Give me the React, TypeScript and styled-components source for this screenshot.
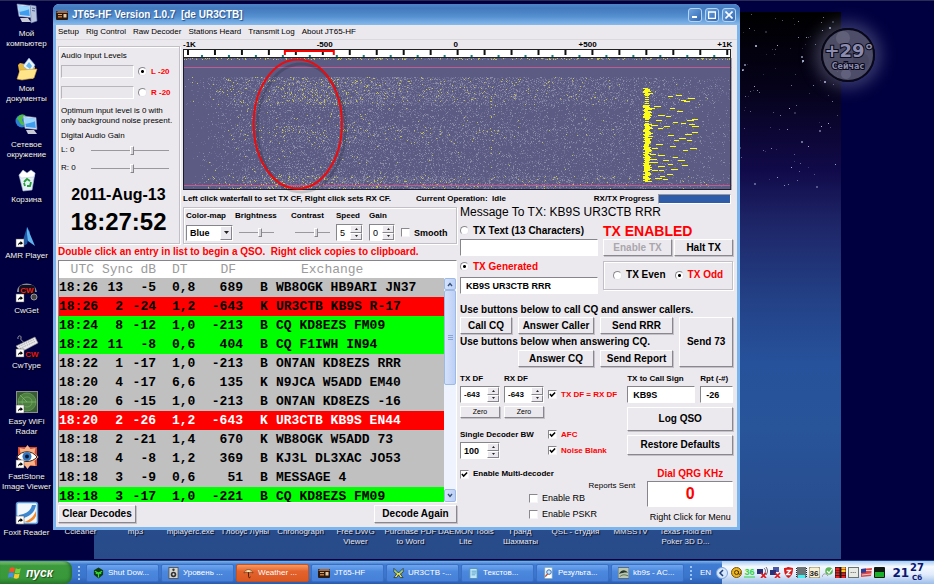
import React from "react";
import styled, { createGlobalStyle, css } from "styled-components";

const SANS = '"Liberation Sans", Arial, sans-serif';
const MONO = '"Liberation Mono", "Courier New", monospace';
const FACE = "#ece9ee";

const GlobalStyle = createGlobalStyle`
  *, *::before, *::after { box-sizing: border-box; }
  html, body { margin: 0; padding: 0; }
  body { font-family: ${SANS}; font-size: 8px; line-height: 10px; color: #000; background: #000040; overflow: hidden; }
  button, input, select { font-family: inherit; margin: 0; padding: 0; border-radius: 0; outline: none; }
  p, h1, h2 { margin: 0; font-weight: inherit; }
`;

/* ---------- random texture helpers ---------- */

function makeRandom(seed: number) {
  let s = seed;
  return () => {
    s = (s * 1664525 + 1013904223) % 4294967296;
    return s / 4294967296;
  };
}

function ramp(stops: number[][], v: number) {
  for (let i = 1; i < stops.length; i++) {
    if (v <= stops[i][0]) {
      const [x0, y0] = stops[i - 1];
      const [x1, y1] = stops[i];
      return y0 + ((y1 - y0) * (v - x0)) / (x1 - x0);
    }
  }
  return stops[stops.length - 1][1];
}

const ACROSS = [[0, 0.02], [20, 0.12], [60, 0.7], [110, 1], [160, 1.05], [240, 0.9], [340, 0.75], [440, 0.55], [500, 0.3], [547, 0.2]];
const YELLOW = [[0, 0], [20, 0.1], [60, 0.4], [110, 1], [150, 1], [200, 0.5], [300, 0.3], [400, 0.2], [480, 0.05], [547, 0]];

function buildNoise() {
  const rnd = makeRandom(77);
  let dim = "";
  let pale = "";
  let yellow = "";
  for (let y = 0; y < 131; y++) {
    let d = 0;
    let h = 0;
    if (y < 2) { d = 0.3; h = 0.16; }
    else if (y < 19) { d = 0; }
    else if (y < 47) { d = 0.5; h = 0.06; }
    else if (y < 66) { d = 0.25; h = 0.01; }
    else if (y < 86) { d = 0.36; h = 0.025; }
    else if (y < 118) { d = 0.27; h = 0.007; }
    else { d = 0.52; h = 0.08; }
    if (y === 72) h = 0.12;
    if (d === 0) continue;
    for (let x = 0; x < 547; x++) {
      const k = y < 2 ? 0.8 : ramp(ACROSS, x);
      const q = y < 2 ? 1 : ramp(YELLOW, x);
      const line = (x === 99 || x === 307) && y > 30 ? 0.12 : 0;
      const r = rnd();
      const cell = `M${x} ${y}h1v1h-1z`;
      if (r < h * q + line * 0.8) yellow += cell;
      else if (r < h * q + d * k * 0.28) pale += cell;
      else if (r < h * q + d * k) dim += cell;
    }
  }
  return { dim, pale, yellow };
}

function buildSignal() {
  const rnd = makeRandom(9);
  let solid = "";
  for (let y = 30; y < 124; y++) {
    const gap = (y > 36 && y < 47) || (y > 60 && y < 66);
    if (gap && y % 2 === 0) continue;
    const x = gap ? 461 : 459 + Math.floor(rnd() * 3);
    const w = gap ? 4 : 5 + Math.floor(rnd() * 4);
    solid += `M${x} ${y}h${w}v1h-${w}z`;
  }
  const dashes = [
    [484, 38], [492, 37], [504, 40], [497, 42], [500, 43], [470, 48], [486, 50], [493, 53], [474, 57], [482, 58],
    [508, 61], [503, 62], [497, 65], [505, 66], [467, 67], [474, 70], [480, 68], [508, 68], [489, 64], [484, 77],
    [495, 80], [503, 82], [508, 74], [506, 90], [499, 92], [466, 96], [474, 97], [489, 99], [479, 102], [494, 102],
    [469, 104], [498, 107], [474, 108], [484, 106], [468, 112], [487, 111], [476, 118], [483, 116], [471, 120], [479, 121],
    [486, 88], [472, 86], [490, 82], [468, 90], [501, 76], [466, 50], [472, 62], [466, 101], [475, 112],
  ];
  return { solid, marks: dashes.map(([x, y], i) => `M${x} ${y}h${5 + (i % 3)}v1h-${5 + (i % 3)}z`).join("") };
}

const noise = buildNoise();
const signal = buildSignal();
const stars = (() => {
  const rnd = makeRandom(31);
  return Array.from({ length: 800 }, () => ({
    x: Math.floor(rnd() * 747),
    y: Math.floor(Math.pow(rnd(), 1.1) * 175),
    o: 0.2 + Math.pow(rnd(), 2) * 0.7,
  }));
})();

/* ---------- desktop ---------- */

const Screen = styled.div`
  min-height: 100vh;
  display: flex;
  flex-direction: column;
  background: #000040;
`;

const Desktop = styled.main`
  position: relative;
  flex: 1;
  display: grid;
  grid-template-columns: 53px 1fr;
  border-top: 1px solid #2b2c54;
`;

const Wallpaper = styled.div`
  position: absolute;
  inset: 11px 93px 1px 94px;
  background: linear-gradient(#000 0%, #05021a 14%, #110a4a 29%, #1d2466 38%, #234085 52%, #26529b 64%, #28549a 76%, #284a88 100%);
  svg { display: block; width: 100%; height: 200px; }
`;

const IconColumn = styled.nav`
  position: relative;
  display: grid;
  grid-auto-rows: 1fr;
  padding: 1px 0 4px;
`;

const DesktopIcon = styled.a`
  display: flex;
  flex-direction: column;
  align-items: center;
  gap: 3px;
  color: #f1f1f8;
  text-decoration: none;
  text-align: center;
  text-shadow: 1px 1px 1px #000;
  white-space: pre;
  svg { display: block; width: 24px; height: 24px; flex: none; }
`;

const ShortcutRow = styled.nav`
  position: relative;
  align-self: end;
  display: grid;
  grid-template-columns: repeat(12, 55px);
  padding-bottom: 13px;
`;

const Shortcut = styled.a`
  height: 20px;
  color: #e4e8f4;
  text-align: center;
  text-decoration: none;
  text-shadow: 1px 1px 1px #001;
  white-space: pre;
`;

const Gadget = styled.aside`
  position: absolute;
  top: 27px;
  right: 59px;
  width: 54px;
  height: 54px;
  border-radius: 50%;
  box-shadow: 0 0 16px 6px rgba(130, 130, 170, 0.45);
  svg { display: block; width: 54px; height: 54px; overflow: visible; }
`;

/* ---------- window ---------- */

const Window = styled.section`
  position: absolute;
  left: 53px;
  right: 194px;
  top: 3px;
  border: 3px solid #7cb4ee;
  border-top: 0;
  border-radius: 6px 6px 0 0;
  background: ${FACE};
`;

const TitleBar = styled.header`
  display: flex;
  align-items: center;
  gap: 4px;
  height: 21px;
  margin: 0 -3px;
  padding: 0 4px 0 3px;
  border-radius: 6px 6px 0 0;
  background: linear-gradient(#4f84c8, #4279bd 20%, #5590d0 60%, #86baec 100%);
  h1 { flex: 1; font-size: 10px; line-height: 14px; font-weight: bold; color: #fff; text-shadow: 1px 1px 1px #23508c; white-space: pre; }
  svg { display: block; }
`;

const CaptionButton = styled.button`
  width: 14px;
  height: 14px;
  margin-left: -1px;
  display: grid;
  place-items: center;
  border: 1px solid #b6d4f2;
  border-radius: 3px;
  background: linear-gradient(135deg, #6da4e0, #3267b4);
`;

const MenuBar = styled.nav`
  display: flex;
  gap: 7px;
  height: 15px;
  padding: 0 2px;
  align-items: center;
  border-bottom: 1px solid #dcd9de;
`;

const MenuItem = styled.button`
  border: 0;
  background: none;
  font-size: 8px;
  line-height: 10px;
  color: #000;
`;

const Body = styled.div`
  display: grid;
  grid-template-columns: 122px 274px 1fr;
  grid-template-rows: auto auto 1fr;
  column-gap: 3px;
  padding: 0 4px 4px 2px;
  grid-template-areas:
    "audio fall fall"
    "audio ctrl tx"
    "list list tx";
`;

const groove = css`
  border: 1px solid #c2bfc6;
  box-shadow: inset 1px 1px 0 #fff, 1px 1px 0 #fff;
`;

const AudioPanel = styled.section`
  grid-area: audio;
  ${groove}
  margin-top: 6px;
  padding: 4px 3px 0 2px;
  display: flex;
  flex-direction: column;
`;

const MeterRow = styled.div`
  display: grid;
  grid-template-columns: 73px 1fr;
  column-gap: 4px;
  align-items: center;
  height: 21px;
`;

const Meter = styled.div`
  height: 13px;
  border: 1px solid;
  border-color: #b8b5bc #fff #fff #b8b5bc;
  background: #eae7ec;
`;

const Note = styled.p`
  margin: 3px 0 5px;
  white-space: nowrap;
`;

const GainRow = styled.label`
  display: grid;
  grid-template-columns: 30px 78px;
  align-items: center;
  height: 18px;
`;

const DateText = styled.p`
  margin-top: 9px;
  text-align: center;
  font: bold 16px/18px ${SANS};
`;

const ClockText = styled.p`
  margin-top: 4px;
  text-align: center;
  font: bold 24px/28px ${SANS};
`;

const Range = styled.input.attrs({ type: "range" })`
  appearance: none;
  width: 100%;
  height: 11px;
  background: linear-gradient(#9a989e, #9a989e) center / 100% 1px no-repeat;
  &::-webkit-slider-thumb {
    appearance: none;
    width: 4px;
    height: 9px;
    border: 1px solid;
    border-color: #fff #87858c #87858c #fff;
    background: #d8d5da;
  }
`;

const Radio = styled.input.attrs({ type: "radio" })`
  appearance: none;
  flex: none;
  width: 9px;
  height: 9px;
  border-radius: 50%;
  border: 1px solid;
  border-color: #8a888e #e6e3e8 #e6e3e8 #8a888e;
  background: #fff;
  &:checked { background: radial-gradient(circle, #000 0 1px, #fff 2px); }
`;

const Check = styled.input.attrs({ type: "checkbox" })`
  appearance: none;
  flex: none;
  width: 9px;
  height: 9px;
  border: 1px solid;
  border-color: #8a888e #f6f4f8 #f6f4f8 #8a888e;
  background: #fff;
  &:checked {
    background: #fff url("data:image/svg+xml,%3Csvg xmlns='http://www.w3.org/2000/svg' viewBox='0 0 8 8'%3E%3Cpath d='M1 3.5 3 5.8 7 1.6' fill='none' stroke='%23000' stroke-width='1.7'/%3E%3C/svg%3E") center / 7px 7px no-repeat;
  }
`;

const Choice = styled.label<{ $size?: number; $red?: boolean; $plain?: boolean }>`
  display: flex;
  align-items: center;
  gap: 4px;
  font-size: ${(p) => p.$size ?? 8}px;
  line-height: 12px;
  font-weight: ${(p) => (p.$plain ? "normal" : "bold")};
  color: ${(p) => (p.$red ? "#f00" : "#000")};
  white-space: nowrap;
`;

const FallPanel = styled.section`
  grid-area: fall;
  padding-right: 2px;
`;

const ScaleLabels = styled.div`
  display: flex;
  justify-content: space-between;
  height: 9px;
  margin-right: -1px;
  font-weight: bold;
`;

const Ruler = styled.svg`
  display: block;
  width: 100%;
  height: 9px;
  border: 1px solid #222;
  background: #fff;
`;

const Waterfall = styled.svg`
  position: relative;
  display: block;
  width: 100%;
  height: 132px;
  overflow: visible;
`;

const StatusRow = styled.div`
  display: flex;
  align-items: center;
  height: 17px;
  font-weight: bold;
  white-space: pre;
  span:nth-child(2) { margin-left: 25px; }
  span:nth-child(3) { margin-left: auto; margin-right: 4px; }
`;

const Progress = styled.div`
  width: 73px;
  height: 10px;
  border: 1px solid;
  border-color: #9a989e #fff #fff #9a989e;
  background: #2f5ca8;
`;

const ControlPanel = styled.section`
  grid-area: ctrl;
  ${groove}
  height: 37px;
  padding: 1px 2px;
  display: grid;
  grid-template-columns: 49px 56px 45px 33px 32px 1fr;
  grid-template-rows: 14px 19px;
  align-items: center;
  font-weight: bold;
  ${Range} { width: 35px; margin-left: 4px; }
`;

const DropDown = styled.div`
  display: grid;
  width: 47px;
  height: 16px;
  border: 1px solid;
  border-color: #87858c #fff #fff #87858c;
  background: #fff;
  select {
    grid-area: 1 / 1;
    appearance: none;
    border: 0;
    background: none;
    padding-left: 3px;
    font: bold 9px/12px ${SANS};
  }
  span {
    grid-area: 1 / 1;
    justify-self: end;
    width: 12px;
    display: grid;
    place-items: center;
    border: 1px solid;
    border-color: #fff #87858c #87858c #fff;
    background: ${FACE};
    pointer-events: none;
  }
`;

const Field = styled.input<{ $big?: boolean }>`
  width: 100%;
  min-width: 0;
  height: 17px;
  padding: 0 5px;
  border: 1px solid;
  border-color: #87858c #fff #fff #87858c;
  background: #fff;
  font: bold 9px/12px ${SANS};
  color: #000;
  ${(p) => p.$big && css`
    height: 26px;
    text-align: center;
    font-size: 16px;
    color: #f00;
  `}
`;

const SpinBox = styled.div<{ $width: number; $plain?: boolean; $size?: number }>`
  width: ${(p) => p.$width}px;
  height: 17px;
  display: grid;
  grid-template-columns: 1fr 12px;
  border: 1px solid;
  border-color: #87858c #fff #fff #87858c;
  background: #fff;
  input {
    width: 100%;
    min-width: 0;
    border: 0;
    background: none;
    padding-left: 3px;
    font-family: ${SANS};
    font-size: ${(p) => p.$size ?? 8}px;
    font-weight: ${(p) => (p.$plain ? "normal" : "bold")};
  }
  div { display: grid; grid-template-rows: 1fr 1fr; }
  button {
    display: grid;
    place-items: center;
    border: 1px solid;
    border-color: #fff #87858c #87858c #fff;
    background: ${FACE};
  }
  svg { display: block; }
`;

/* ---------- decode list ---------- */

const ListPanel = styled.section`
  grid-area: list;
  display: flex;
  flex-direction: column;
`;

const Hint = styled.p`
  height: 16px;
  font: bold 10px/15px ${SANS};
  color: #f00;
  white-space: pre;
`;

const ListBox = styled.div`
  flex: 1 1 0;
  min-height: 0;
  display: flex;
  overflow: hidden;
  border: 1px solid;
  border-color: #87858c #fff #fff #87858c;
  background: #fff;
`;

const TableClip = styled.div`
  flex: 1;
  overflow: hidden;
`;

const DecodeTable = styled.table`
  width: 100%;
  table-layout: fixed;
  border-collapse: collapse;
  font: bold 13px/19px ${MONO};
  th, td { padding: 0; text-align: right; white-space: pre; }
  th { height: 17px; line-height: 16px; font-weight: normal; color: #9b9b9b; }
  th:nth-child(1) { padding-right: 8px; }
  th:nth-child(2) { text-align: left; }
  th:nth-child(4), td:nth-child(4) { text-align: left; padding-left: 16px; }
  th:nth-child(5) { padding-right: 7px; }
  td:nth-child(6) { text-align: left; padding-left: 17px; }
  td:nth-child(7) { text-align: left; }
  th:nth-child(7) { text-align: left; padding-left: 25px; }
  td:nth-child(1) { text-align: left; }
`;

const DecodeRow = styled.tr<{ $tone: string; $light?: boolean }>`
  height: 19px;
  background: ${(p) => p.$tone};
  color: ${(p) => (p.$light ? "#fff" : "#000")};
`;

const ScrollBar = styled.div`
  width: 12px;
  margin-top: 17px;
  display: grid;
  grid-template-rows: 12px 95px 1fr 13px;
  background: #eef3fd;
  button {
    display: grid;
    place-items: center;
    border: 1px solid #9db9e4;
    border-radius: 2px;
    background: linear-gradient(90deg, #d5e2fb, #bccff5);
  }
  button:last-child { grid-row: 4; }
`;

const ListButtons = styled.div`
  display: flex;
  justify-content: space-between;
  padding-top: 2px;
`;

const Push = styled.button<{ $size?: number; $height?: number; $width?: number; $plain?: boolean }>`
  height: ${(p) => p.$height ?? 18}px;
  ${(p) => p.$width && `width: ${p.$width}px;`}
  border: 1px solid;
  border-color: #fff #8a888e #8a888e #fff;
  box-shadow: 1px 1px 0 #c4c1c8;
  background: ${FACE};
  font-size: ${(p) => p.$size ?? 10}px;
  line-height: 10px;
  font-weight: ${(p) => (p.$plain ? "normal" : "bold")};
  color: #000;
  white-space: nowrap;
  &:disabled { color: #a9a6ac; }
`;

/* ---------- transmit pane ---------- */

const TxPanel = styled.section`
  grid-area: tx;
`;

const MessageLine = styled.h2`
  height: 14px;
  margin-top: -2px;
  margin-bottom: 3px;
  font-size: 12px;
  line-height: 14px;
  white-space: nowrap;
`;

const TxTop = styled.div`
  display: grid;
  grid-template-columns: 138px 1fr;
  column-gap: 5px;
  grid-template-rows: 17px 17px 21px 17px;
  align-items: center;
  margin-bottom: 8px;
`;

const Enabled = styled.strong`
  font-size: 14px;
  line-height: 16px;
  color: #f00;
`;

const ButtonPair = styled.div`
  display: grid;
  grid-template-columns: 69px 1fr;
  column-gap: 2px;
`;

const ParityBox = styled.div`
  ${groove}
  grid-column: 2;
  grid-row: 3 / 5;
  height: 29px;
  display: flex;
  align-items: center;
  justify-content: space-evenly;
`;

const Advice = styled.p`
  grid-column: 1 / 4;
  font: bold 10px/15px ${SANS};
  white-space: nowrap;
`;

const CallGrid = styled.div`
  display: grid;
  grid-template-columns: 52px 76px 73px 1fr;
  column-gap: 6px;
  grid-template-rows: 17px 16px 17px;
  margin-bottom: 5px;
  ${Push} { height: 100%; }
  > :nth-child(4) { grid-row: 1 / 4; grid-column: 4; }
  > :nth-child(6) { grid-column: 2; }
`;

const Heading = styled.span`
  font-weight: bold;
  line-height: 14px;
  white-space: nowrap;
`;

const Settings = styled.div`
  display: grid;
  grid-template-columns: 1fr 106px;
  column-gap: 10px;
`;

const Deviation = styled.div`
  display: grid;
  grid-template-columns: 40px 40px 1fr;
  column-gap: 4px;
  grid-template-rows: 14px 17px 3px 12px;
  align-items: center;
  > ${Push} { grid-row: 4; }
`;

const Decoder = styled.div`
  display: grid;
  grid-template-columns: 84px 1fr;
  column-gap: 4px;
  grid-template-rows: 15px 17px;
  align-items: center;
  margin-top: 9px;
`;

const CallColumn = styled.div`
  display: grid;
  grid-template-columns: 1fr 33px;
  column-gap: 5px;
  grid-template-rows: 14px 17px;
  align-content: start;
  > ${Push} { grid-column: 1 / 3; height: 24px; margin-top: 4px; }
  > ${Push} + ${Push} { height: 20px; }
`;

const Bottom = styled.div`
  display: grid;
  grid-template-columns: 1fr 86px;
  column-gap: 12px;
  margin-top: 8px;
`;

const Reports = styled.div`
  display: grid;
  grid-template-rows: 14px 10px 14px 18px;
  align-items: center;
  span { justify-self: end; }
  ${Choice}:nth-child(n + 3) { margin-left: 69px; }
`;

const Dial = styled.div`
  display: flex;
  flex-direction: column;
  align-items: center;
  font-size: 9px;
  line-height: 12px;
  label { font-size: 10px; line-height: 14px; font-weight: bold; color: #f00; }
  span { margin-top: 4px; white-space: nowrap; }
`;

/* ---------- taskbar ---------- */

const TaskBar = styled.footer`
  display: flex;
  align-items: center;
  height: 24px;
  border-top: 1px solid #163c78;
  background: linear-gradient(#7fb2ea, #3f7cd2 15%, #3a75cc 70%, #2a5cb0 100%);
`;

const StartButton = styled.button`
  align-self: stretch;
  display: flex;
  align-items: center;
  gap: 4px;
  width: 72px;
  padding-left: 8px;
  border: 0;
  border-radius: 0 8px 8px 0;
  background: linear-gradient(#8ccd84, #3c9a3c 20%, #38983a 75%, #2a7a2c 100%);
  box-shadow: inset -2px 0 3px #2a7030;
  color: #fff;
  font: italic bold 12px/14px ${SANS};
  text-shadow: 1px 1px 1px #1d4d1d;
  svg { display: block; }
`;

const Grip = styled.span`
  width: 4px;
  height: 15px;
  margin: 0 5px;
  background: radial-gradient(circle, #9cc4f4 0 1px, transparent 1px) 0 0 / 4px 4px;
`;

const Tasks = styled.div`
  display: grid;
  grid-template-columns: repeat(8, 73px);
  column-gap: 2px;
`;

const Task = styled.button<{ $hot?: boolean }>`
  display: flex;
  align-items: center;
  gap: 4px;
  height: 18px;
  padding-left: 6px;
  border: 1px solid ${(p) => (p.$hot ? "#c8501c" : "#3a6fc4")};
  border-radius: 2px;
  background: ${(p) => (p.$hot ? "linear-gradient(#f59a62, #e4622c 40%, #dc5822)" : "linear-gradient(#6ea6ee, #4c88de 40%, #4680d8)")};
  color: #fff;
  font-size: 8px;
  white-space: nowrap;
  svg { display: block; flex: none; }
`;

const Language = styled.span`
  margin: 0 11px 0 auto;
  color: #fff;
`;

const Tray = styled.div`
  align-self: stretch;
  display: flex;
  align-items: center;
  gap: 2px;
  width: 212px;
  background: linear-gradient(#a8cbf4, #f6faff 25%, #dfeafa 60%, #9dbdea 100%);
  svg { display: block; flex: none; }
  > svg:first-child { margin-left: -6px; margin-right: 1px; }
`;

const TrayClock = styled.time`
  display: grid;
  grid-template-columns: auto auto;
  column-gap: 1px;
  margin-left: auto;
  margin-right: 10px;
  color: #0a1670;
  font: bold 12px/16px "DejaVu Sans", sans-serif;
  b { grid-row: 1 / 3; align-self: center; }
  span { font-size: 10px; line-height: 12px; }
  small { font-size: 7px; line-height: 9px; text-align: center; }
`;

/* ---------- drawings ---------- */

const ShortcutArrow = () => (
  <g>
    <rect x="1" y="15" width="8" height="8" fill="#fff" stroke="#555" strokeWidth=".5" />
    <path d="M3 21.500c0-2 1-3 2.500-3.200V17L8 19.200 5.500 21v-1.200C4.500 20 4 20.500 3 21.500z" fill="#000" />
  </g>
);

const Monitor = ({ x = 0, y = 0 }: { x?: number; y?: number }) => (
  <g transform={`translate(${x} ${y})`}>
    <path d="M4 16h8l3 4H6z" fill="#c9ccd8" />
    <path d="M1 2l13 1.500 1 12L3 14.500z" fill="#dfe6f2" stroke="#7a8eb4" strokeWidth=".6" />
    <path d="M2.500 3.500l10.500 1.200.8 9.300-10-1z" fill="#3f9df0" />
    <path d="M2.500 3.500l10.500 1.200.2 2.500C9 9 6 9 3.200 10z" fill="#9ad6ff" />
  </g>
);

const art: Record<string, React.ReactNode> = {
  computer: (
    <>
      <path d="M15 3l6 1 1 15-6 2z" fill="#b8c3dd" stroke="#6c7fa8" strokeWidth=".6" />
      <path d="M17 6l3 .5M17 8.500l3 .5" stroke="#4d6196" />
      <Monitor x={1} />
    </>
  ),
  documents: (
    <>
      <path d="M3 8l2-2 5 1 1 2 9 1-2 12-13-2z" fill="#e9b93c" />
      <path d="M8 9l6-8 6 7-4 8z" fill="#eaf5ff" stroke="#7aa9da" strokeWidth=".6" />
      <path d="M11 9l3-4 3 4-2 3z" fill="#65b6ee" />
      <path d="M2 22l3-9 17-1-3 9-12 2z" fill="#ffe48a" stroke="#c89a30" strokeWidth=".6" />
    </>
  ),
  network: (
    <>
      <circle cx="7" cy="8" r="6.500" fill="#2b7fd6" />
      <path d="M2 5c3-4 6-4 8-3 1 3-3 3-3 5s3 2 2 5c-3 1-4-2-5-4s-2-1-2-3z" fill="#4dbb3e" />
      <Monitor x={7} y={1} />
    </>
  ),
  bin: (
    <>
      <path d="M4 7l16-2-3 17-9 1z" fill="#e6f0f8" stroke="#a4b8cc" strokeWidth=".6" />
      <path d="M4 7l4-5 4 3 4-3 4 3-1 4-13 1z" fill="#fff" stroke="#a8c4dc" strokeWidth=".5" />
      <path d="M9 14l3-3 3 2M16 14l-1 4h-3M9 15l1 3" stroke="#28a038" strokeWidth="1.800" fill="none" />
    </>
  ),
  amr: (
    <>
      <path d="M6 23L12 3l3 5-3 12z" fill="#1e5ba8" />
      <path d="M12 3l8 19-7-5-1-7z" fill="#5fb4f0" />
      <ShortcutArrow />
    </>
  ),
  cwget: (
    <>
      <path d="M3 13C3 3 20 3 21 13" fill="none" stroke="#8a8a96" strokeWidth="2" />
      <rect x="4" y="6" width="16" height="9" rx="4" fill="#101020" />
      <text x="12" y="14" fontFamily="Liberation Sans" fontWeight="bold" fontSize="8" fill="#f02020" textAnchor="middle">CW</text>
      <circle cx="19" cy="18" r="3" fill="#444" stroke="#999" />
      <ShortcutArrow />
    </>
  ),
  cwtype: (
    <>
      <path d="M3 5c-1-4 4-4 3-1s3 3 3 5" fill="none" stroke="#999" />
      <path d="M1 12L20 3l3 6L6 18z" fill="#e8e8ec" stroke="#888" strokeWidth=".6" />
      <path d="M4 12.500L19 5.500M5 14.500l15-7" stroke="#aaa" strokeDasharray="1.500 1" />
      <text x="17" y="23" fontFamily="Liberation Sans" fontWeight="bold" fontSize="8" fill="#e01818" textAnchor="middle">CW</text>
      <ShortcutArrow />
    </>
  ),
  wifi: (
    <>
      <rect x="1.500" y="1.500" width="21" height="21" fill="#385c34" stroke="#8a8f8a" />
      <circle cx="12" cy="12" r="9" fill="#4d8040" stroke="#77a866" strokeWidth=".6" />
      <circle cx="12" cy="12" r="5" fill="none" stroke="#80b070" strokeWidth=".6" />
      <path d="M12 12L5 5M3 12h18" stroke="#8cc87c" strokeWidth=".6" />
      <ShortcutArrow />
    </>
  ),
  faststone: (
    <>
      <rect x="3" y="2" width="19" height="19" fill="#d8462c" />
      <path d="M12.500 0l3 4 5-1-1 5 4 4-4 4 1 5-5-1-3 4-3-4-5 1 1-5-4-4 4-4-1-5 5 1z" fill="#f7b48a" />
      <path d="M2 12c5-7 15-7 20 0-5 6-15 6-20 0z" fill="#fff" stroke="#402010" />
      <circle cx="12" cy="11.500" r="4.500" fill="#3678c0" />
      <circle cx="12" cy="11.500" r="2" fill="#0a1430" />
      <ShortcutArrow />
    </>
  ),
  foxit: (
    <>
      <rect x="1.500" y="1.500" width="21" height="21" rx="2" fill="#f2f7fc" stroke="#5d9bd8" strokeWidth="1.500" />
      <path d="M4 14C12 13 16 9 17 4h4C20 12 13 17 4 18z" fill="#3d86d0" />
      <path d="M9 21c6-2 10-6 12-11v5c-2 4-5 6-8 6.500z" fill="#f08a2c" />
      <ShortcutArrow />
    </>
  ),
};

const desktopIcons: [string, string][] = [
  ["computer", "Мой\nкомпьютер"],
  ["documents", "Мои\nдокументы"],
  ["network", "Сетевое\nокружение"],
  ["bin", "Корзина"],
  ["amr", "AMR Player"],
  ["cwget", "CwGet"],
  ["cwtype", "CwType"],
  ["wifi", "Easy WiFi\nRadar"],
  ["faststone", "FastStone\nImage Viewer"],
  ["foxit", "Foxit Reader"],
];

const shortcuts = [
  "Ccleaner", "mp3", "mplayerc.exe", "Глобус Луны", "Chronograph", "Free DWG\nViewer",
  "Purchase PDF\nto Word", "DAEMON Tools\nLite", "Гранд\nШахматы", "QSL - студия", "MMSSTV", "Texas Hold'em\nPoker 3D D...",
];

const RadioSet = () => (
  <svg width="12" height="10" viewBox="0 0 12 10">
    <rect y="1" width="12" height="9" rx="1" fill="#2a1a12" />
    <path d="M0 3l2-2h9l1 2z" fill="#a86a3c" />
    <rect x="2" y="4" width="4" height="1" fill="#d8a860" />
    <rect x="2" y="6" width="4" height="1.500" fill="#c07840" />
    <rect x="7.500" y="4" width="3" height="3.500" fill="#e6c8a0" />
  </svg>
);

const taskArt: Record<string, React.ReactNode> = {
  shut: <><path d="M1 3l5-3 5 3v5l-5 4-5-4z" fill="#0e3a12" /><path d="M2 4l4 2 4-2M6 6v5M3 6l2 1M9 6L7 7" stroke="#35d838" strokeWidth="1.300" fill="none" /></>,
  level: <><rect x="1" width="10" height="12" fill="#d4d4d0" stroke="#555" /><circle cx="6" cy="7.500" r="3" fill="#333" /><circle cx="6" cy="7.500" r="1.200" fill="#ddd" /><circle cx="6" cy="2.500" r="1.300" fill="#333" /></>,
  weather: <><path d="M1 6c2-5 8-5 10 0l-2.500-1L6 6 3.500 5z" fill="#ffe2b0" stroke="#5a2c10" strokeWidth=".7" /><path d="M6 5v5c0 1.500 2 1.500 2 0" stroke="#401c08" fill="none" /></>,
  butterfly: <><path d="M1 1l5 5 5-5v4L8 7l3 4H8L6 8l-2 3H1l3-4-3-2z" fill="#f5e23a" stroke="#0b2a50" strokeWidth=".8" /><path d="M2 3l3 3M10 3L7 6" stroke="#1fb0d8" /></>,
  text: <><path d="M2 1h8v11H2z" fill="#bfe6f6" stroke="#4f8fb8" /><path d="M4 4h5M4 6h5M4 8h4" stroke="#3c8fc0" strokeWidth=".8" /></>,
  search: <><path d="M2 0h8v12H2z" fill="#fff" stroke="#8aa" strokeWidth=".7" /><circle cx="6.500" cy="5" r="2.500" fill="#c6e4fa" stroke="#2c66b8" /><path d="M5 7L2.500 10" stroke="#c84820" strokeWidth="1.500" /></>,
  acdsee: <><rect width="12" height="12" fill="#b9c6b2" stroke="#567" /><path d="M1 7c3-5 7-5 10-1-3-1-5 0-10 1z" fill="#26382c" /><path d="M2 10c3-3 6-2 9-1" stroke="#576b50" fill="none" /></>,
};

const tasks: [string, string][] = [
  ["shut", "Shut Dow..."], ["level", "Уровень ..."], ["weather", "Weather ..."], ["jt", "JT65-HF"],
  ["butterfly", "UR3CTB -..."], ["text", "Текстов..."], ["search", "Результа..."], ["acdsee", "kb9s - AC..."],
];

const trayArt: React.ReactNode[] = [
  <><circle cx="5.500" cy="5.500" r="5" fill="#e8b422" stroke="#7a5200" /><circle cx="5.500" cy="5.500" r="2" fill="none" stroke="#5a3a00" /><path d="M7.500 4v3c1 1 2 0 2-1.500" stroke="#5a3a00" fill="none" /></>,
  <><text x="5.500" y="8" fontFamily="Liberation Sans" fontWeight="bold" fontSize="9" fill="#2fd840" textAnchor="middle">36</text><path d="M0 10h11" stroke="#2fd840" /></>,
  <><rect y="2" width="6" height="5" fill="#28307a" /><path d="M7 1c2 2 2 4 0 6M9 0c2 3 2 5 0 8" stroke="#667" fill="none" /><path d="M4 6l5 5M9 6l-5 5" stroke="#e01818" strokeWidth="1.600" /></>,
  <><rect x="3" width="6" height="5" fill="#4a58a8" /><rect y="3" width="6" height="5" fill="#28307a" /><path d="M5 6l5 5M10 6l-5 5" stroke="#e01818" strokeWidth="1.600" /></>,
  <><path d="M1 1c3 0 3-1 4.500-1S8 1 10 1c0 5-1 8-4.500 10C2 9 1 6 1 1z" fill="#d41c1c" /><path d="M3.500 3.500h4l-4 4h4" stroke="#fff" strokeWidth="1.300" fill="none" /></>,
  <><rect x="1" width="9" height="11" fill="#6d7478" /><path d="M.5 1v10M10.500 1v10" stroke="#222" strokeDasharray="1 1" /><rect x="2" y="8" width="7" height="3" fill="#3ff0f0" /></>,
  <><rect width="11" height="11" rx="2" fill="#f6efd2" stroke="#8a7a50" /><text x="5" y="8.500" fontFamily="Liberation Sans" fontWeight="bold" fontSize="8" fill="#222" textAnchor="middle">36</text></>,
  <><circle cx="7" cy="4" r="3.800" fill="#5cb858" /><path d="M5 4l2 2 3-4" stroke="#fff" strokeWidth="1.200" fill="none" /><path d="M0 10c1-4 4-4 6-1" stroke="#999" fill="none" /></>,
  <><rect width="11" height="11" fill="#181818" /><path d="M2.500 11V0M8.500 11V0" stroke="#f02020" strokeWidth="4" strokeDasharray="2 .7" /><path d="M8.500 5V0" stroke="#f0d020" strokeWidth="4" strokeDasharray="2 .7" /></>,
  <><rect x=".5" y=".5" width="10" height="10" fill="#e8eae6" stroke="#6c7470" /><path d="M2.500 5.500h6" stroke="#8a8f8a" strokeDasharray="1.500 .5" /></>,
  <><path d="M0 2l11-1-1 8-10 1z" fill="#d84848" /><path d="M0 2l5-.5v4L0 6z" fill="#2c3c98" /><path d="M1 8l9-1M5 3.500h6" stroke="#fff" strokeWidth=".7" /></>,
  <><rect width="11" height="11" rx="1" fill="#101810" /><rect x="1" y="5" width="9" height="5" fill="#18b028" /></>,
];

const Arrow = () => (
  <svg width="5" height="3" viewBox="0 0 5 3"><path d="M0 0h5L2.500 3z" fill="#222" /></svg>
);

const SpinArrow = ({ up }: { up?: boolean }) => (
  <svg width="3" height="2" viewBox="0 0 3 2"><path d={up ? "M0 2h3L1.500 0z" : "M0 0h3L1.500 2z"} fill="#222" /></svg>
);

const Chevron = ({ up }: { up?: boolean }) => (
  <svg width="6" height="5" viewBox="0 0 6 5"><path d={up ? "M1 4l2-2.500L5 4" : "M1 1l2 2.500L5 1"} fill="none" stroke="#34507c" strokeWidth="1.400" /></svg>
);

function Spin({ label, value, width, plain, size }: { label: string; value: string; width: number; plain?: boolean; size?: number }) {
  return (
    <SpinBox $width={width} $plain={plain} $size={size}>
      <input aria-label={label} defaultValue={value} />
      <div>
        <button aria-label={`${label} up`}><SpinArrow up /></button>
        <button aria-label={`${label} down`}><SpinArrow /></button>
      </div>
    </SpinBox>
  );
}

const GRAY = "#c0c0c0";
const RED = "#f00";
const GREEN = "#0f0";

const decodes: [string, string, string, string, string, string, string, string, boolean?][] = [
  [GRAY, "18:26", "13", "-5", "0,8", "689", "B", "WB8OGK HB9ARI JN37"],
  [RED, "18:26", "2", "-24", "1,2", "-643", "K", "UR3CTB KB9S R-17"],
  [GREEN, "18:24", "8", "-12", "1,0", "-213", "B", "CQ KD8EZS FM09"],
  [GREEN, "18:22", "11", "-8", "0,6", "404", "B", "CQ F1IWH IN94"],
  [GRAY, "18:22", "1", "-17", "1,0", "-213", "B", "ON7AN KD8EZS RRR"],
  [GRAY, "18:20", "4", "-17", "6,6", "135", "K", "N9JCA W5ADD EM40"],
  [GRAY, "18:20", "6", "-15", "1,0", "-213", "B", "ON7AN KD8EZS -16"],
  [RED, "18:20", "2", "-26", "1,2", "-643", "K", "UR3CTB KB9S EN44", true],
  [GRAY, "18:18", "2", "-21", "1,4", "670", "K", "WB8OGK W5ADD 73"],
  [GRAY, "18:18", "4", "-8", "1,2", "369", "B", "KJ3L DL3XAC JO53"],
  [GRAY, "18:18", "3", "-9", "0,6", "51", "B", "MESSAGE 4"],
  [GREEN, "18:18", "3", "-17", "1,0", "-221", "B", "CQ KD8EZS FM09"],
];

const columnWidths = [43, 21, 33, 41, 46, 33];

/* ---------- sections ---------- */

function AudioLevels() {
  return (
    <AudioPanel>
      <p>Audio Input Levels</p>
      <MeterRow>
        <Meter role="meter" aria-label="Left level" aria-valuenow={0} />
        <Choice $red><Radio name="channel" defaultChecked />L -20</Choice>
      </MeterRow>
      <MeterRow>
        <Meter role="meter" aria-label="Right level" aria-valuenow={0} />
        <Choice $red><Radio name="channel" />R -20</Choice>
      </MeterRow>
      <Note>Optimum input level is 0 with<br />only background noise present.</Note>
      <p>Digital Audio Gain</p>
      <GainRow>L: 0<Range defaultValue={53} /></GainRow>
      <GainRow>R: 0<Range defaultValue={53} /></GainRow>
      <DateText>2011-Aug-13</DateText>
      <ClockText>18:27:52</ClockText>
    </AudioPanel>
  );
}

function FallView() {
  return (
    <FallPanel>
      <ScaleLabels>
        <span>-1K</span><span>-500</span><span>0</span><span>+500</span><span>+1K</span>
      </ScaleLabels>
      <Ruler viewBox="0 0 547 7" preserveAspectRatio="none">
        {Array.from({ length: 21 }, (_, i) => (
          <React.Fragment key={i}>
            <rect x={3 + i * 27} y="0" width="2" height="5" fill="#111" />
            <rect x={17 + i * 27} y="5" width="2" height="2" fill="#0a8080" />
          </React.Fragment>
        ))}
        <path d="M101 5V1h49v4" fill="none" stroke="#f00" strokeWidth="2" />
      </Ruler>
      <Waterfall viewBox="0 0 547 132" preserveAspectRatio="none">
        <rect width="547" height="132" fill="#5b5b83" />
        <g shapeRendering="crispEdges">
          <path d={noise.dim} fill="#6d6d93" />
          <path d={noise.pale} fill="#8a8aa4" />
          <path d={noise.yellow} fill="#c4c452" />
          <path d={signal.solid + signal.marks} fill="#fdfd1c" />
        </g>
        <path d="M0 9.500h547M0 127.500h547" stroke="#c05c90" />
        <path d="M.5 0v131.500h546V0" fill="none" stroke="#1c1c2c" />
        <ellipse cx="118" cy="70" rx="44" ry="64" fill="none" stroke="#000" strokeOpacity=".16" strokeWidth="3" />
        <ellipse cx="114.500" cy="66" rx="44" ry="64.500" fill="none" stroke="#f00a0a" strokeWidth="2" />
      </Waterfall>
      <StatusRow>
        <span>Left click waterfall to set TX CF, Right click sets RX CF.</span>
        <span>Current Operation:  Idle</span>
        <span>RX/TX Progress</span>
        <Progress role="progressbar" aria-label="RX/TX Progress" aria-valuenow={100} />
      </StatusRow>
    </FallPanel>
  );
}

function DisplayControls() {
  return (
    <ControlPanel>
      <span>Color-map</span><span>Brightness</span><span>Contrast</span><span>Speed</span><span>Gain</span><span />
      <DropDown>
        <select aria-label="Color-map" defaultValue="Blue"><option>Blue</option></select>
        <span><Arrow /></span>
      </DropDown>
      <Range aria-label="Brightness" defaultValue={60} />
      <Range aria-label="Contrast" defaultValue={60} />
      <Spin label="Speed" value="5" width={27} plain size={9} />
      <Spin label="Gain" value="0" width={26} plain size={9} />
      <Choice $size={9}><Check />Smooth</Choice>
    </ControlPanel>
  );
}

function DecodeList() {
  return (
    <ListPanel>
      <Hint>{"Double click an entry in list to begin a QSO.  Right click copies to clipboard."}</Hint>
      <ListBox>
        <TableClip>
          <DecodeTable>
            <colgroup>
              {columnWidths.map((w, i) => <col key={i} width={w} />)}
              <col />
            </colgroup>
            <thead>
              <tr><th>UTC</th><th>Sync</th><th>dB</th><th>DT</th><th>DF</th><th /><th>Exchange</th></tr>
            </thead>
            <tbody>
              {decodes.map(([tone, utc, sync, db, dt, df, type, text, light], i) => (
                <DecodeRow key={i} $tone={tone} $light={light}>
                  <td>{utc}</td><td>{sync}</td><td>{db}</td><td>{dt}</td><td>{df}</td><td>{type}</td><td>{text}</td>
                </DecodeRow>
              ))}
            </tbody>
          </DecodeTable>
        </TableClip>
        <ScrollBar>
          <button aria-label="Scroll up"><Chevron up /></button>
          <button aria-label="Scroll thumb">
            <svg width="5" height="5" viewBox="0 0 5 5"><path d="M0 .5h5M0 2.500h5M0 4.500h5" stroke="#8aa4d0" /></svg>
          </button>
          <button aria-label="Scroll down"><Chevron /></button>
        </ScrollBar>
      </ListBox>
      <ListButtons>
        <Push $width={78}>Clear Decodes</Push>
        <Push $width={83}>Decode Again</Push>
      </ListButtons>
    </ListPanel>
  );
}

function Transmit() {
  return (
    <TxPanel>
      <MessageLine>Message To TX: KB9S UR3CTB RRR</MessageLine>
      <TxTop>
        <Choice $size={10}><Radio name="source" />TX Text (13 Characters)</Choice>
        <Enabled>TX ENABLED</Enabled>
        <Field aria-label="TX Text" />
        <ButtonPair>
          <Push $height={17} disabled>Enable TX</Push>
          <Push $height={17}>Halt TX</Push>
        </ButtonPair>
        <Choice $size={10} $red><Radio name="source" defaultChecked />TX Generated</Choice>
        <ParityBox>
          <Choice $size={10}><Radio name="parity" />TX Even</Choice>
          <Choice $size={10} $red><Radio name="parity" defaultChecked />TX Odd</Choice>
        </ParityBox>
        <Field aria-label="TX Generated" defaultValue="KB9S UR3CTB RRR" />
      </TxTop>
      <Advice>Use buttons below to call CQ and answer callers.</Advice>
      <CallGrid>
        <Push>Call CQ</Push>
        <Push>Answer Caller</Push>
        <Push>Send RRR</Push>
        <Push>Send 73</Push>
        <Advice>Use buttons below when answering CQ.</Advice>
        <Push>Answer CQ</Push>
        <Push>Send Report</Push>
      </CallGrid>
      <Settings>
        <div>
          <Deviation>
            <Heading>TX DF</Heading><Heading>RX DF</Heading><span />
            <Spin label="TX DF" value="-643" width={40} />
            <Spin label="RX DF" value="-643" width={40} />
            <Choice $red><Check defaultChecked />TX DF = RX DF</Choice>
            <Push $height={12} $size={7} $plain>Zero</Push>
            <Push $height={12} $size={7} $plain>Zero</Push>
          </Deviation>
          <Decoder>
            <Heading>Single Decoder BW</Heading>
            <Choice $red><Check defaultChecked />AFC</Choice>
            <Spin label="Single Decoder BW" value="100" width={40} size={9} />
            <Choice $red><Check defaultChecked />Noise Blank</Choice>
          </Decoder>
        </div>
        <CallColumn>
          <Heading>TX to Call Sign</Heading>
          <Heading>Rpt (-#)</Heading>
          <Field aria-label="TX to Call Sign" defaultValue="KB9S" />
          <Field aria-label="Rpt" defaultValue="-26" />
          <Push>Log QSO</Push>
          <Push>Restore Defaults</Push>
        </CallColumn>
      </Settings>
      <Bottom>
        <Reports>
          <Choice><Check defaultChecked />Enable Multi-decoder</Choice>
          <span>Reports Sent</span>
          <Choice $size={9} $plain><Check />Enable RB</Choice>
          <Choice $size={9} $plain><Check />Enable PSKR</Choice>
        </Reports>
        <Dial>
          <label htmlFor="dial">Dial QRG KHz</label>
          <Field id="dial" $big defaultValue="0" />
          <span>Right Click for Menu</span>
        </Dial>
      </Bottom>
    </TxPanel>
  );
}

export default function App() {
  return (
    <Screen>
      <GlobalStyle />
      <Desktop>
        <Wallpaper>
          <svg viewBox="0 0 747 200" preserveAspectRatio="none">
            {stars.map((s, i) => <rect key={i} x={s.x} y={s.y} width={i % 9 ? 1 : 2} height={i % 9 ? 1 : 2} fill="#c8d0f0" opacity={s.o} />)}
          </svg>
        </Wallpaper>
        <IconColumn>
          {desktopIcons.map(([id, label]) => (
            <DesktopIcon key={id} href="#"><svg viewBox="0 0 24 24">{art[id]}</svg>{label}</DesktopIcon>
          ))}
        </IconColumn>
        <ShortcutRow>
          {shortcuts.map((s) => <Shortcut key={s} href="#">{s}</Shortcut>)}
        </ShortcutRow>
        <Gadget>
          <svg viewBox="0 0 54 54">
            <circle cx="27" cy="27" r="26" fill="#54546e" fillOpacity=".92" stroke="#080818" strokeWidth="2" />
            <circle cx="22" cy="10" r="7" fill="#6e6e86" opacity=".6" />
            <circle cx="40" cy="33" r="8" fill="#44445c" opacity=".6" />
            <circle cx="25" cy="46" r="5" fill="#70708a" opacity=".6" />
            <g fontFamily="DejaVu Sans, sans-serif" fontWeight="bold" fill="#8c8cae" stroke="#080818" paintOrder="stroke" strokeWidth="2">
              <text x="28" y="29" fontSize="18" textAnchor="middle">+29°</text>
              <text x="27" y="41" fontSize="8" textAnchor="middle">Сейчас</text>
            </g>
          </svg>
        </Gadget>
        <Window>
          <TitleBar>
            <RadioSet />
            <h1>{"JT65-HF Version 1.0.7  [de UR3CTB]"}</h1>
            <CaptionButton aria-label="Minimize"><svg width="8" height="8"><rect x="1" y="5" width="5" height="2" fill="#fff" /></svg></CaptionButton>
            <CaptionButton aria-label="Maximize"><svg width="8" height="8"><path d="M0 1h8M.5 1v6.500h7V1" fill="none" stroke="#fff" strokeWidth="1.500" /></svg></CaptionButton>
            <CaptionButton aria-label="Close"><svg width="8" height="8"><path d="M.5.5l7 7M7.500.5l-7 7" stroke="#fff" strokeWidth="1.600" /></svg></CaptionButton>
          </TitleBar>
          <MenuBar>
            {["Setup", "Rig Control", "Raw Decoder", "Stations Heard", "Transmit Log", "About JT65-HF"].map((m) => <MenuItem key={m}>{m}</MenuItem>)}
          </MenuBar>
          <Body>
            <AudioLevels />
            <FallView />
            <DisplayControls />
            <Transmit />
            <DecodeList />
          </Body>
        </Window>
      </Desktop>
      <TaskBar>
        <StartButton>
          <svg width="14" height="12" viewBox="0 0 14 12">
            <path d="M2 1c2-1 3-1 5 0L6 5.500c-2-1-3-1-5 0z" fill="#f0542c" />
            <path d="M7.800 1.200c2 1 3 1 5 0l-1 4.500c-2 1-3 1-5 0z" fill="#7cd03c" />
            <path d="M.8 6.300c2-1 3-1 5 0l-1 4.500c-2-1-3-1-5 0z" fill="#4a8cf0" />
            <path d="M6.600 6.500c2 1 3 1 5 0l-1 4.500c-2 1-3 1-5 0z" fill="#f8cc30" />
          </svg>
          пуск
        </StartButton>
        <Grip />
        <Tasks>
          {tasks.map(([id, label]) => (
            <Task key={id} $hot={id === "weather"}>
              {id === "jt" ? <RadioSet /> : <svg width="11" height="12" viewBox="0 0 12 12">{taskArt[id]}</svg>}
              {label}
            </Task>
          ))}
        </Tasks>
        <Grip />
        <Language>EN</Language>
        <Tray>
          <svg width="12" height="12" viewBox="0 0 12 12">
            <circle cx="6" cy="6" r="5.500" fill="#d8e8fc" stroke="#7ea4dc" />
            <path d="M7 3L4 6l3 3" stroke="#1c3c7c" strokeWidth="1.500" fill="none" />
          </svg>
          {trayArt.map((a, i) => <svg key={i} width="11" height="11" viewBox="0 0 11 11">{a}</svg>)}
          <TrayClock><b>21</b><span>27</span><small>Сб</small></TrayClock>
        </Tray>
      </TaskBar>
    </Screen>
  );
}
